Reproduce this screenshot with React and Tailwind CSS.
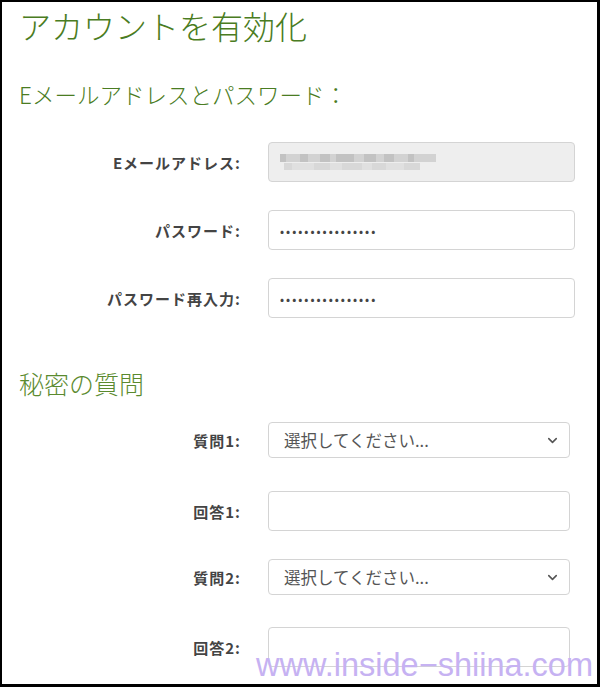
import { ChevronDown } from "lucide-react";

const jp = "font-['Noto_Sans_CJK_JP','Noto_Sans',sans-serif]";

function Label({ children }) {
  return (
    <div className="w-[239px] shrink-0 text-right text-[15px] tracking-[1px] font-bold text-[#444] leading-none">
      {children}
    </div>
  );
}

function Row({ label, children, className = "" }) {
  return (
    <div className={`flex items-center ${className}`}>
      <Label>{label}</Label>
      <div className="ml-[27px]">{children}</div>
    </div>
  );
}

function TextBox({ value, type = "text", disabled, width = "w-[307px]" }) {
  return (
    <input
      type={type}
      defaultValue={value}
      readOnly
      disabled={disabled}
      className={`${width} h-[40px] rounded-[4px] border border-[#d4d4d4] px-[11px] text-[12px] text-[#444] tracking-[2px] outline-none ${
        disabled ? "bg-[#eeeeee]" : "bg-white"
      }`}
    />
  );
}

function SelectBox() {
  return (
    <div className="w-[302px] h-[36px] rounded-[4px] border border-[#d4d4d4] bg-white flex items-center justify-between pl-[15px] pr-[9px]">
      <span className="text-[16.5px] text-[#555]">選択してください...</span>
      <ChevronDown size={15} strokeWidth={2.5} className="text-[#555]" />
    </div>
  );
}

// pixelated address, blurred in the original
function BlurredEmail() {
  const top = [6, 14, 8, 12, 10, 6, 18, 10, 12, 8, 10, 14, 6, 22];
  const bottom = [8, 22, 16, 12, 20, 10, 14, 18, 16];
  return (
    <div className="w-[307px] h-[40px] rounded-[4px] border border-[#d4d4d4] bg-[#eeeeee] px-[11px] flex flex-col justify-center gap-[1px]">
      <div className="flex h-[8px]">
        {top.map((w, i) => (
          <div key={i} className={`h-full ${i % 2 ? "bg-[#d2d2d2]" : "bg-[#c2c2c2]"}`} style={{ width: w }} />
        ))}
      </div>
      <div className="flex h-[7px] pl-[4px]">
        {bottom.map((w, i) => (
          <div key={i} className={`h-full ${i % 2 ? "bg-[#e0e0e0]" : "bg-[#d8d8d8]"}`} style={{ width: w }} />
        ))}
      </div>
    </div>
  );
}

export default function App() {
  return (
    <div
      className={`${jp} relative w-[600px] h-[687px] overflow-hidden bg-white border-l-2 border-t-2 border-r-[3px] border-b-[3px] border-black`}
    >
      <div className="pl-[17px]">
        <h1 className="text-[32px] leading-[40px] font-light text-[#4a7c22] mt-[3px]">アカウントを有効化</h1>
        <h2 className="text-[22.5px] leading-[30px] font-light text-[#4a7c22] mt-[34px]">Eメールアドレスとパスワード：</h2>
      </div>

      <Row label="Eメールアドレス:" className="mt-[33px]">
        <BlurredEmail />
      </Row>
      <Row label="パスワード:" className="mt-[28px]">
        <TextBox type="password" value="••••••••••••••••" />
      </Row>
      <Row label="パスワード再入力:" className="mt-[28px]">
        <TextBox type="password" value="••••••••••••••••" />
      </Row>

      <div className="pl-[17px]">
        <h2 className="text-[25px] leading-[32px] font-light text-[#5a8a2e] mt-[49px]">秘密の質問</h2>
      </div>

      <Row label="質問1:" className="mt-[23px]">
        <SelectBox />
      </Row>
      <Row label="回答1:" className="mt-[33px]">
        <TextBox width="w-[302px]" />
      </Row>
      <Row label="質問2:" className="mt-[28px]">
        <SelectBox />
      </Row>
      <Row label="回答2:" className="mt-[32px]">
        <TextBox width="w-[302px]" />
      </Row>

      <div className="absolute right-[4px] bottom-[3px] font-['Liberation_Sans',Arial,sans-serif] text-[32.5px] leading-none text-[#c6b2f2]">
        www.inside−shiina.com
      </div>
    </div>
  );
}
